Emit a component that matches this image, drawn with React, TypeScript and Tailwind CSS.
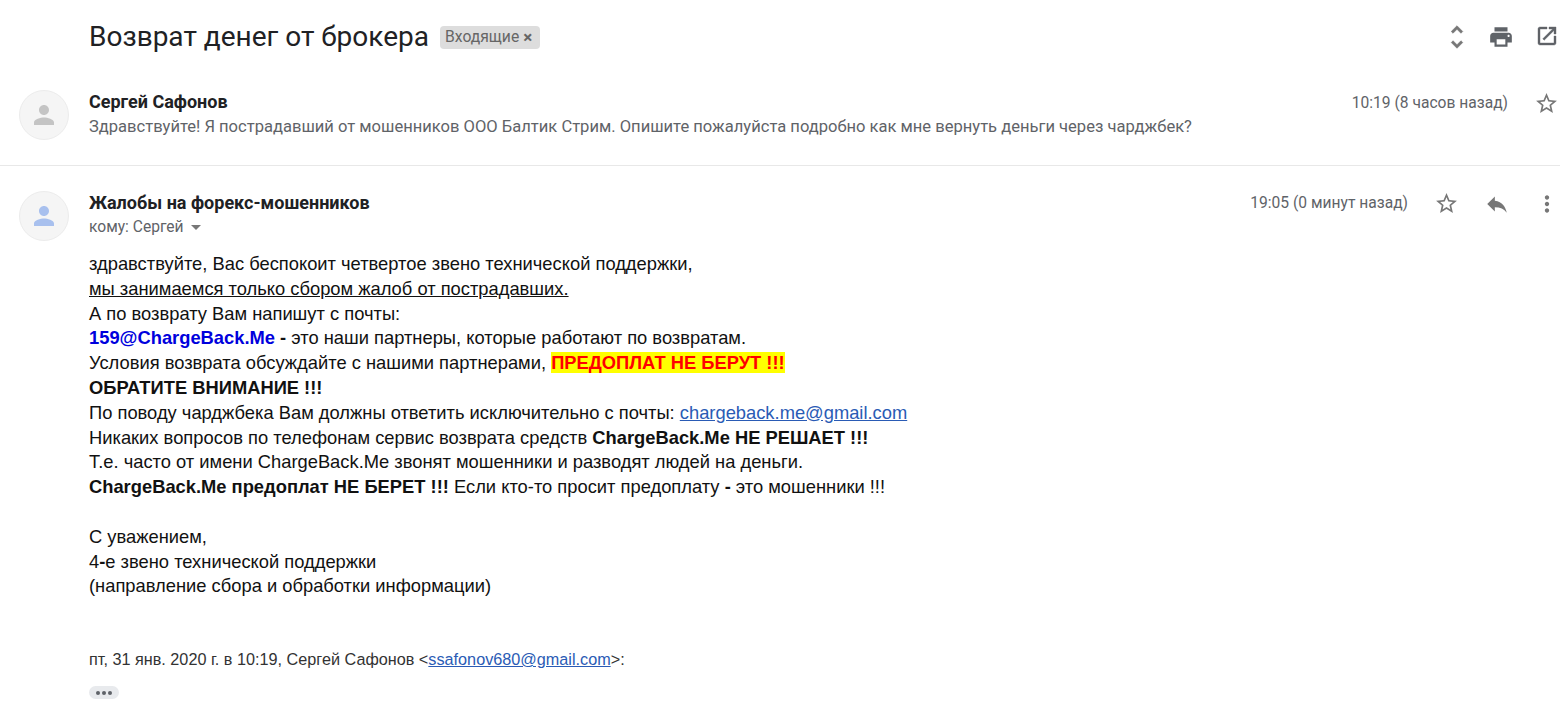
const paths = {
    unfold: "M12 5.83L15.17 9l1.41-1.41L12 3 7.41 7.59 8.83 9 12 5.83zm0 12.34L8.83 15l-1.41 1.41L12 21l4.59-4.59L15.17 15 12 18.17z",
    print: "M19 8H5c-1.66 0-3 1.34-3 3v6h4v4h12v-4h4v-6c0-1.66-1.34-3-3-3zm-3 11H8v-5h8v5zm3-7c-.55 0-1-.45-1-1s.45-1 1-1 1 .45 1 1-.45 1-1 1zm-1-9H6v4h12V3z",
    open: "M19 19H5V5h7V3H5c-1.11 0-2 .9-2 2v14c0 1.1.89 2 2 2h14c1.1 0 2-.9 2-2v-7h-2v7zM14 3v2h3.59l-9.83 9.83 1.41 1.41L19 6.41V10h2V3h-7z",
    star: "M22 9.24l-7.19-.62L12 2 9.19 8.63 2 9.24l5.46 4.73L5.82 21 12 17.27 18.18 21l-1.63-7.03L22 9.24zM12 15.4l-3.76 2.27 1-4.28-3.32-2.88 4.38-.38L12 6.1l1.71 4.04 4.38.38-3.32 2.88 1 4.28L12 15.4z",
    reply: "M10 9V5l-7 7 7 7v-4.1c5 0 8.5 1.6 11 5.1-1-5-4-10-11-11z",
    more: "M12 8c1.1 0 2-.9 2-2s-.9-2-2-2-2 .9-2 2 .9 2 2 2zm0 2c-1.1 0-2 .9-2 2s.9 2 2 2 2-.9 2-2-.9-2-2-2zm0 6c-1.1 0-2 .9-2 2s.9 2 2 2 2-.9 2-2-.9-2-2-2z",
    person: "M12 12c2.21 0 4-1.79 4-4s-1.79-4-4-4-4 1.79-4 4 1.79 4 4 4zm0 2c-2.67 0-8 1.34-8 4v2h16v-2c0-2.66-5.33-4-8-4z",
};

const Icon = ({ d, className }: { d: string; className: string }) => (
    <svg viewBox="0 0 24 24" className={className} fill="currentColor">
        <path d={d} />
    </svg>
);

const Avatar = ({ color }: { color: string }) => (
    <div className="w-[50px] h-[50px] shrink-0 rounded-full bg-[#f5f5f5] border border-[#ececec] flex items-center justify-center">
        <Icon d={paths.person} className={`w-[30px] h-[30px] ${color}`} />
    </div>
);

export default function App() {
    return (
        <div className="w-[1567px] h-[726px] overflow-hidden bg-white font-['Roboto',sans-serif]">
            <div className="w-[1560px]">
                {/* Subject */}
                <div className="h-[74px] flex items-center pl-[89px] pr-[1px]">
                    <h1 className="text-[28px] leading-none text-[#202124]">Возврат денег от брокера</h1>
                    <span className="ml-[11px] h-[23px] pl-[5px] pr-[8px] flex items-center gap-[4px] rounded-[4px] bg-[#dddddd] text-[15.7px] text-[#666666]">
                        Входящие <span className="text-[17px] leading-none font-bold text-[#666666]">×</span>
                    </span>
                    <div className="ml-auto flex items-center gap-[16px] text-[#5f6368]">
                        <Icon d={paths.unfold} className="w-[30px] h-[30px] text-[#777777] stroke-current stroke-[0.5]" />
                        <Icon d={paths.print} className="w-[26px] h-[26px]" />
                        <Icon d={paths.open} className="ml-[5px] mb-[2px] w-[24px] h-[24px] stroke-current stroke-[0.4]" />
                    </div>
                </div>

                {/* Collapsed message */}
                <div className="h-[92px] pt-[16px] pl-[19px] flex border-b border-[#e8e8e8]">
                    <Avatar color="text-[#c4c4c4]" />
                    <div className="ml-[20px] flex-1 min-w-0">
                        <div className="text-[18px] leading-[24px] font-bold text-[#202124]">Сергей Сафонов</div>
                        <div className="text-[16.56px] leading-[26px] text-[#5f6368]">
                            Здравствуйте! Я пострадавший от мошенников ООО Балтик Стрим. Опишите пожалуйста подробно как мне вернуть деньги через чарджбек?
                        </div>
                    </div>
                    <div className="flex items-start pt-[1px]">
                        <span className="mt-[1px] text-[15.6px] leading-[22px] text-[#5f6368]">10:19 (8 часов назад)</span>
                        <Icon d={paths.star} className="ml-[26px] mr-[1px] w-[25px] h-[25px] text-[#777777]" />
                    </div>
                </div>

                {/* Open message */}
                <div className="pt-[25px] pl-[19px] flex">
                    <Avatar color="text-[#a8c0ee]" />
                    <div className="ml-[20px] flex-1 min-w-0">
                        <div className="flex items-start">
                            <div className="flex-1">
                                <div className="text-[18px] leading-[24px] font-bold text-[#202124]">Жалобы на форекс-мошенников</div>
                                <div className="flex items-center text-[15.6px] leading-[24px] text-[#5f6368]">
                                    кому: Сергей
                                    <span className="ml-[7px] w-0 h-0 border-x-[5px] border-t-[5px] border-x-transparent border-t-[#777777]"></span>
                                </div>
                            </div>
                            <div className="flex items-start text-[#777777]">
                                <span className="mt-[1px] text-[15.6px] leading-[22px] text-[#5f6368]">19:05 (0 минут назад)</span>
                                <Icon d={paths.star} className="ml-[26px] mr-[1px] w-[25px] h-[25px]" />
                                <Icon d={paths.reply} className="ml-[24px] w-[26px] h-[26px]" />
                                <Icon d={paths.more} className="ml-[24px] w-[26px] h-[26px]" />
                            </div>
                        </div>

                        <div className="mt-[13px] font-['Liberation_Sans',sans-serif] text-[18.33px] leading-[24.8px] text-[#111111]">
                            <div>здравствуйте, Вас беспокоит четвертое звено технической поддержки,</div>
                            <div className="underline">мы занимаемся только сбором жалоб от пострадавших.</div>
                            <div>А по возврату Вам напишут с почты:</div>
                            <div><b className="text-[#0000dd]">159@ChargeBack.Me</b> <b>-</b> это наши партнеры, которые работают по возвратам.</div>
                            <div>Условия возврата обсуждайте с нашими партнерами, <b className="bg-[#ffff00] text-[#ff0000]">ПРЕДОПЛАТ НЕ БЕРУТ !!!</b></div>
                            <div><b>ОБРАТИТЕ ВНИМАНИЕ !!!</b></div>
                            <div>По поводу чарджбека Вам должны ответить исключительно с почты: <a className="text-[#2a5bb5] underline">chargeback.me@gmail.com</a></div>
                            <div>Никаких вопросов по телефонам сервис возврата средств <b>ChargeBack.Me НЕ РЕШАЕТ !!!</b></div>
                            <div>Т.е. часто от имени ChargeBack.Me звонят мошенники и разводят людей на деньги.</div>
                            <div><b>ChargeBack.Me предоплат НЕ БЕРЕТ !!!</b> Если кто-то просит предоплату <b>-</b> это мошенники !!!</div>
                            <div className="mt-[24.8px]">С уважением,</div>
                            <div>4<b>-</b>е звено технической поддержки</div>
                            <div>(направление сбора и обработки информации)</div>
                        </div>

                        <div className="mt-[48px] font-['Liberation_Sans',sans-serif] text-[16.23px] leading-[24px] text-[#333333]">
                            пт, 31 янв. 2020 г. в 10:19, Сергей Сафонов &lt;<a className="text-[#2a5bb5] underline">ssafonov680@gmail.com</a>&gt;:
                        </div>
                        <div className="mt-[15px] w-[30px] h-[13px] rounded-full bg-[#e8eaed] flex items-center justify-center gap-[2px]">
                            <span className="w-[4px] h-[4px] rounded-full bg-[#5f6368]"></span>
                            <span className="w-[4px] h-[4px] rounded-full bg-[#5f6368]"></span>
                            <span className="w-[4px] h-[4px] rounded-full bg-[#5f6368]"></span>
                        </div>
                    </div>
                </div>
            </div>
        </div>
    );
}
